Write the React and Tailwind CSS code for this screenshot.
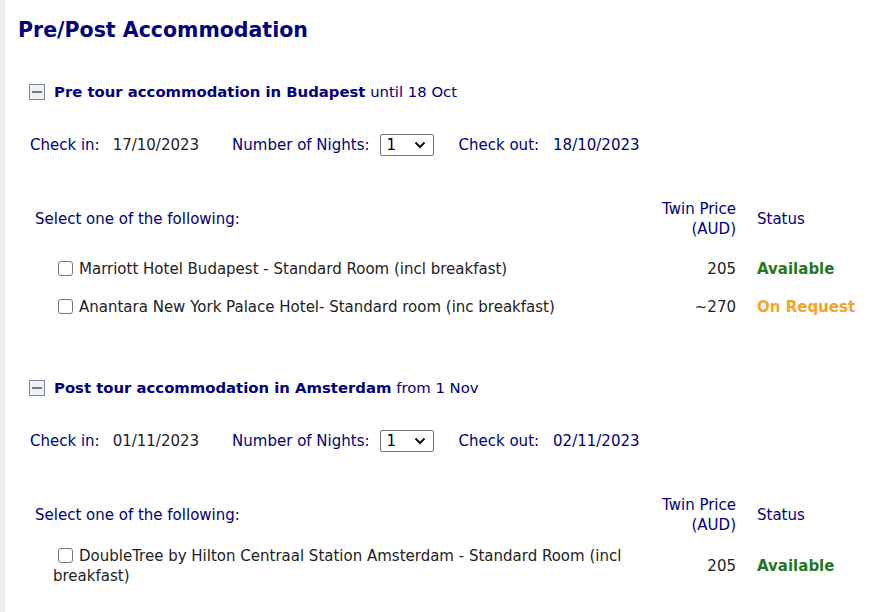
import React from 'react';

const font = { fontFamily: '"DejaVu Sans", Verdana, sans-serif' };

function MinusBox() {
    return (
        <svg width="16" height="16" viewBox="0 0 16 16" className="shrink-0">
            <rect x="0.5" y="0.5" width="15" height="15" fill="#eef0f3" stroke="#7d8a99" />
            <line x1="3" y1="8" x2="13" y2="8" stroke="#4a5460" strokeWidth="1.5" />
        </svg>
    );
}

function NightsSelect() {
    return (
        <div className="flex items-center justify-between w-[54px] h-[22px] border border-[#767676] rounded-[2px] bg-white pl-[6px] pr-[7px] text-[15px] text-black">
            <span>1</span>
            <svg width="12" height="8" viewBox="0 0 12 8">
                <path d="M1.5 1.5 L6 6 L10.5 1.5" fill="none" stroke="#111" strokeWidth="2" />
            </svg>
        </div>
    );
}

function Checkbox() {
    return <span className="inline-block align-[-2px] w-[15px] h-[15px] border border-[#767676] rounded-[3px] bg-white ml-[5px] mr-[6px]" />;
}

function Section({ title, suffix, checkIn, checkOut, hotels, first }) {
    return (
        <div>
            <div className={`flex items-center h-[30px] pl-[24px] ${first ? 'mt-[17px]' : 'mt-[47px]'}`}>
                <MinusBox />
                <span className="ml-[9px] text-[14.85px] text-[#000080]">
                    <b>{title}</b> {suffix}
                </span>
            </div>
            <div className="flex items-center h-[30px] mt-[23px] pl-[25px] text-[15px]">
                <span className="text-[#000080]">Check in:</span>
                <span className="ml-[13px] text-[#222]">{checkIn}</span>
                <span className="ml-[33px] text-[#000080]">Number of Nights:</span>
                <span className="ml-[10px]"><NightsSelect /></span>
                <span className="ml-[25px] text-[#000080]">Check out:</span>
                <span className="ml-[14px] text-[#000080]">{checkOut}</span>
            </div>
            <div className="grid grid-cols-[18px_587px_96px_1fr] mt-[37px] ml-[30px] text-[15px]">
                <div className="col-span-2 h-[44px] flex items-center text-[#000080]">Select one of the following:</div>
                <div className="h-[44px] flex flex-col justify-center items-end text-right leading-[20px] text-[#000080]">
                    <span>Twin Price</span>
                    <span>(AUD)</span>
                </div>
                <div className="h-[44px] flex items-center pl-[21px] text-[#000080]">Status</div>
                <div className="col-span-4 h-[9px]" />
                {hotels.map((h) => (
                    <React.Fragment key={h.name}>
                        <div />
                        <div className="min-h-[38px] flex items-center text-[#222] leading-[20px]">
                            <span>
                                <Checkbox />
                                {h.name}
                            </span>
                        </div>
                        <div className="flex items-center justify-end text-[#222]">{h.price}</div>
                        <div className={`flex items-center pl-[21px] font-bold ${h.status === 'Available' ? 'text-[#1f7a1f]' : 'text-[#f5a42a]'}`}>
                            {h.status}
                        </div>
                    </React.Fragment>
                ))}
            </div>
        </div>
    );
}

export default function App() {
    return (
        <div className="flex min-h-[612px] bg-white" style={font}>
            <div className="w-[5px] bg-[#f0f0f0] shrink-0" />
            <div className="flex-1">
                <div className="h-[60px] flex items-center pl-[13px]">
                    <h1 className="text-[20.5px] font-bold text-[#000080]">Pre/Post Accommodation</h1>
                </div>
                <Section
                    first
                    title="Pre tour accommodation in Budapest"
                    suffix="until 18 Oct"
                    checkIn="17/10/2023"
                    checkOut="18/10/2023"
                    hotels={[
                        { name: 'Marriott Hotel Budapest - Standard Room (incl breakfast)', price: '205', status: 'Available' },
                        { name: 'Anantara New York Palace Hotel- Standard room (inc breakfast)', price: '~270', status: 'On Request' },
                    ]}
                />
                <Section
                    title="Post tour accommodation in Amsterdam"
                    suffix="from 1 Nov"
                    checkIn="01/11/2023"
                    checkOut="02/11/2023"
                    hotels={[
                        { name: 'DoubleTree by Hilton Centraal Station Amsterdam - Standard Room (incl breakfast)', price: '205', status: 'Available' },
                    ]}
                />
            </div>
        </div>
    );
}
